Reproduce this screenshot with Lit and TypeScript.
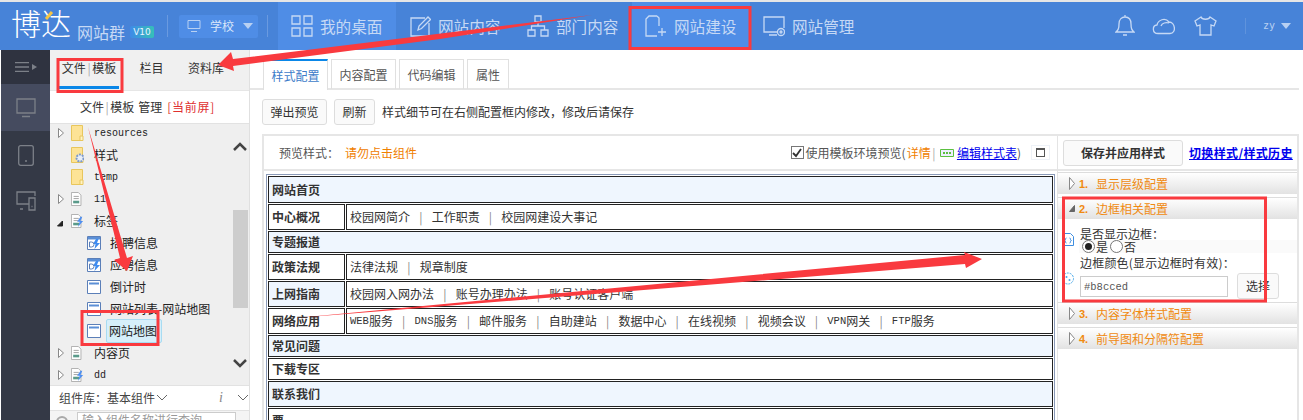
import { LitElement, html, css, svg } from "lit";
import { customElement } from "lit/decorators.js";

const ICONS: Record<string, any> = {
  desk: svg`<path d="M1 1h8v8H1zM13 1h8v8h-8zM1 13h8v8H1zM13 13h8v8h-8z"/>`,
  edit: svg`<path d="M16 3H2v18h18V8M9 15l1-4L19 2l2.500 2.500-9 9z"/>`,
  org: svg`<path d="M8 1h6v6H8zM1 15h7v6H1zM14 15h7v6h-7zM11 7v4M4.500 15v-4h13v4"/>`,
  build: svg`<path d="M12 1H4L1 4v17h11M12 1l2 2v8M13 17h8M17 13v8"/>`,
  manage: svg`<path d="M15 17H1V2h20v11M6 20h8"/><circle cx="18" cy="17" r="3.500"/><circle cx="18" cy="17" r="1"/>`,
};
const NAV = [
  ["desk", "我的桌面"],
  ["edit", "网站内容"],
  ["org", "部门内容"],
  ["build", "网站建设"],
  ["manage", "网站管理"],
];
type Row = { t: string; k: string; open?: boolean; arrow?: boolean; child?: boolean; sel?: boolean; latin?: boolean };
const TREE: Row[] = [
  { t: "resources", k: "folder", arrow: true, latin: true },
  { t: "样式", k: "gear" },
  { t: "temp", k: "folder", latin: true },
  { t: "11", k: "page", arrow: true, latin: true },
  { t: "标签", k: "bolt", open: true },
  { t: "招聘信息", k: "dyn", child: true },
  { t: "应聘信息", k: "dyn", child: true },
  { t: "倒计时", k: "win", child: true },
  { t: "网站列表-网站地图", k: "win", child: true },
  { t: "网站地图", k: "win", child: true, sel: true },
  { t: "内容页", k: "page", arrow: true },
  { t: "dd", k: "bolt", arrow: true, latin: true },
];
const ROWS: { l: string; links?: string[]; h: number; blue: boolean; lblue?: boolean }[] = [
  { l: "网站首页", h: 27, blue: true },
  { l: "中心概况", links: ["校园网简介", "工作职责", "校园网建设大事记"], h: 26, blue: false },
  { l: "专题报道", h: 22, blue: true },
  { l: "政策法规", links: ["法律法规", "规章制度"], h: 26, blue: false },
  { l: "上网指南", links: ["校园网入网办法", "账号办理办法", "账号认证客户端"], h: 26, blue: false, lblue: true },
  { l: "网络应用", links: ["WEB服务", "DNS服务", "邮件服务", "自助建站", "数据中心", "在线视频", "视频会议", "VPN网关", "FTP服务"], h: 26, blue: false },
  { l: "常见问题", h: 22, blue: true },
  { l: "下载专区", h: 22, blue: false },
  { l: "联系我们", h: 26, blue: true },
  { l: "票", h: 26, blue: false },
];

function treeIcon(k: string) {
  if (k === "folder" || k === "gear")
    return html`<svg class="ti" viewBox="0 0 13 16"><path d="M.5.5h11v15H.5z" fill="#fde396" stroke="#e8c65c"/><path d="M9 11h3v4.500H9z" fill="#fff3c4" stroke="#e8c65c"/>${k === "gear"
        ? svg`<circle cx="9" cy="11" r="3.500" fill="#e8eef8" stroke="#7d9acb" stroke-width="2" stroke-dasharray="2 1"/>`
        : ""}</svg>`;
  if (k === "page" || k === "bolt")
    return html`<svg class="ti" viewBox="0 0 15 16"><path d="M.5.5h8l3 3v12H.5z" fill="#fff" stroke="#a8a8a8"/><path d="M3 5h6M3 7.500h6" stroke="#999"/><path d="M2.500 10h7v3h-7z" fill="#5a9a8a"/>${k === "bolt"
        ? svg`<path d="M11 3l-4 6h3l-2 6 6-7h-3l2-5z" fill="#4f8ff0"/>`
        : ""}</svg>`;
  if (k === "dyn")
    return html`<svg class="ci" viewBox="0 0 14 14"><path d="M.5.5h13v13H.5z" fill="#fff" stroke="#5b7fb8"/><path d="M1 1h12v2.500H1z" fill="#5b8fd6"/><path d="M9 3L6 8h2.500l-1 5L13 7h-3l1.500-4z" fill="#3f8cf0"/><path d="M2.500 6h2a2 2 0 010 5h-2z" fill="none" stroke="#5b7fb8"/></svg>`;
  return html`<svg class="ci" viewBox="0 0 14 14"><path d="M.5.5h13v13H.5z" fill="#fff" stroke="#5b7fb8"/><path d="M2 2.500h10v2H2z" fill="#5b8fd6"/></svg>`;
}

@customElement("app-root")
export class AppRoot extends LitElement {
  static styles = css`
    :host { display: block; width: 1303px; height: 420px; overflow: hidden; position: relative; background: #fff;
      font: 12px/16px "Noto Sans CJK SC", "Liberation Sans", sans-serif; color: #333; }
    * { box-sizing: border-box; }
    .top { height: 2px; background: #e6e6e6; }
    header { height: 48px; background: #4783d8; display: flex; align-items: stretch; color: #c6d9f5; }
    .logo { width: 167px; display: flex; align-items: center; padding-left: 11px; position: relative; }
    .bd { font-size: 30px; line-height: 38px; color: #fff; font-weight: 300; width: 66px; margin-top: -9px; }
    .qun { font-size: 16px; color: #c6d9f5; margin: 12px 0 0 0; width: 53px; white-space: nowrap; }
    .badge { width: 24px; height: 12px; border-radius: 2px; background: linear-gradient(90deg, #3f8ae8, #35c0b8); color: #e8f4ff;
      font: 9px/12px "DejaVu Sans", sans-serif; text-align: center; margin-top: 12px; }
    .sep { width: 1px; height: 22px; background: #6a9ae0; align-self: center; flex: none; }
    .schoolwrap { width: 99px; display: flex; align-items: center; padding-left: 11px; }
    .school { width: 79px; height: 23px; background: #4f8de6; border-radius: 2px; display: flex; align-items: center; padding-left: 8px; gap: 9px; font-size: 12px; color: #d8e6fa; }
    .school svg { width: 14px; height: 14px; flex: none; fill: none; stroke: #b8d0f2; }
    .tri { width: 0; height: 0; border-left: 5.500px solid transparent; border-right: 5.500px solid transparent; border-top: 6px solid #b8d0f2; }
    .navs { margin-left: 10px; display: flex; }
    .nav { width: 118px; display: flex; align-items: center; padding-left: 13px; gap: 7px; font-size: 15.600px; white-space: nowrap; }
    .nav.hl { background: #4f8de6; }
    .nav svg { width: 22px; height: 22px; fill: none; stroke: #c6d9f5; stroke-width: 1.300; flex: none; }
    .rt { margin-left: auto; display: flex; align-items: center; padding-right: 12px; }
    .rt svg { fill: none; stroke: #c6d9f5; stroke-width: 1.300; }
    .bell { width: 20px; height: 22px; margin-right: 17px; }
    .cloud { width: 25px; height: 18px; margin-right: 17px; }
    .shirt { width: 23px; height: 20px; margin-right: 28px; }
    .rt .sep { background: #5f93dc; height: 16px; margin-right: 17px; }
    .zy { font: 10px/12px "DejaVu Sans Mono", monospace; color: #b8d0f2; margin-right: 6px; }

    .body { display: flex; height: 370px; }
    .rail { width: 49px; margin-left: 1px; background: #343946; flex: none; }
    .rail .m { height: 34px; background: #2f3340; display: flex; align-items: center; justify-content: center; }
    .rail .d { height: 47px; display: flex; align-items: center; justify-content: center; background: #454b5f; }
    .rail .e { height: 46px; display: flex; align-items: center; justify-content: center; }
    .rail .d + .e { margin-top: 1px; }
    .rail svg { fill: none; stroke: #7c8088; stroke-width: 1.300; }

    .side { width: 200px; flex: none; background: #efefef; border-right: 1px solid #e0e0e0; display: flex; flex-direction: column; }
    .stabs { height: 40px; flex: none; display: flex; padding-left: 9px; background: #f0f0f0; }
    .stab { width: 60px; text-align: center; padding-top: 10px; color: #333; height: 40px; white-space: nowrap; }
    .stab.on { border-bottom: 3px solid #0a87e8; height: 39px; }
    .p { color: #aaa; margin: 0 1.500px; }
    .stab.b { width: 45px; margin-left: 10px; }
    .stab.c { width: 36px; margin-left: 14px; }
    .shead { height: 34px; flex: none; background: #fff; border-bottom: 1px solid #e2e2e2; padding: 8px 0 0 30px; color: #333; white-space: nowrap; border-top: 1px solid #e6e6e6; }
    .shead b { font-weight: 400; margin-left: 4px; }
    .shead i { font-style: normal; color: #e03030; margin-left: 5px; letter-spacing: .7px; }
    .tree { height: 261px; flex: none; position: relative; overflow: hidden; }
    .tr { height: 22px; display: flex; align-items: center; position: relative; color: #222; white-space: nowrap; }
    .tr:first-child { margin-top: -2px; }
    .ar { position: absolute; left: 8px; top: 6px; width: 6px; height: 10px; fill: #fff; stroke: #888; }
    .ar.o { fill: #222; stroke: #222; top: 9px; left: 7px; }
    .ti { width: 13px; height: 16px; margin-left: 21px; flex: none; }
    .ci { width: 14px; height: 14px; margin-left: 37px; flex: none; }
    .lb { margin-left: 10px; }
    .child .lb { margin-left: 8px; padding: 0 1px; }
    .lat { font: 10px/16px "Liberation Mono", monospace; position: relative; top: 1px; }
    .sel .lb { background: #d6effa; border: 1px solid #a8dcf2; border-radius: 2px; padding: 3px 4px 3px 2px; margin-left: 5px; }
    .thumb { position: absolute; right: 1px; top: 86px; width: 15px; height: 98px; background: #cdcdcd; }
    .chev { position: absolute; right: 2px; width: 14px; height: 9px; fill: none; stroke: #444; stroke-width: 2.500; }
    .lib { height: 25px; flex: none; background: #fff; border-top: 1px solid #e2e2e2; display: flex; align-items: center; padding-left: 9px; color: #444; position: relative; }
    .lib svg { width: 12px; height: 8px; fill: none; stroke: #666; margin-left: 1px; }
    .lib em { position: absolute; left: 169px; font: italic 14px "Liberation Serif", serif; color: #888; }
    .lib .v2 { position: absolute; left: 186px; }
    .sr { flex: 1; min-height: 0; overflow: hidden; background: #f4f4f4; border-top: 1px solid #e2e2e2; display: flex; padding: 1px 0 0 6px; gap: 9px; }
    .sr svg { width: 12px; height: 14px; fill: none; stroke: #aaa; stroke-width: 2; margin-top: 3px; flex: none; }
    .sr div { width: 159px; height: 14px; border: 1px solid #ccc; border-bottom: 0; background: #fff; color: #999; padding-left: 4px; line-height: 14px; overflow: hidden; white-space: nowrap; flex: none; }

    main { flex: 1; min-width: 0; padding: 0 4px 0 0; }
    .tabs { height: 40px; border-bottom: 2px solid #e6e6e6; display: flex; padding: 9px 0 0 13px; gap: 3px; }
    .tab { width: 65px; height: 30px; border: 1px solid #e0e0e0; border-bottom: 0; text-align: center; line-height: 29px; color: #555; flex: none; }
    .tab.on { border-top: 2px solid #0a87e8; color: #3d7cc9; height: 31px; background: #fff; }
    .tab.s { width: 42px; }
    .tools { height: 44px; display: flex; align-items: center; padding: 0 0 0 12px; gap: 7px; }
    .btn { height: 26px; border: 1px solid #ddd; border-radius: 3px; background: #fafafa; padding: 0 7.500px; line-height: 24px; color: #333; flex: none; text-align: center; }
    .frame { margin-left: 12px; border: 2px solid #e6e6e6; border-bottom: 0; height: 286px; display: flex; background: #fff; }
    .pv { width: 794px; flex: none; border-right: 1px solid #e4e4e4; }
    .pvh { height: 35px; border-bottom: 2px solid #e6e6e6; display: flex; align-items: center; padding-left: 15px; color: #555; white-space: nowrap; }
    .pvh .w { color: #f08000; margin-left: 6px; }
    .sp { flex: 1; }
    .chk { width: 13px; height: 13px; border: 1px solid #777; background: #fff; display: flex; align-items: center; justify-content: center; margin-right: 2px; }
    .chk svg { width: 10px; height: 10px; fill: none; stroke: #333; stroke-width: 1.800; }
    .or { color: #f08000; margin-left: 1px; }
    .lnk { color: #0000ee; text-decoration: underline; }
    .mini { width: 19px; height: 15px; border: 1px solid #eef2f8; margin: 0 7px 0 10px; display: flex; align-items: center; justify-content: center; }
    .mini span { display: block; width: 9px; height: 9px; border: 1px solid #555; border-top-width: 2px; }
    .css { width: 15px; height: 12px; flex: none; margin: 0 2px 0 3px; }
    .tbl { margin: 3px 0 0 2px; border: 1px solid #8a9ab8; padding: 1px 1px 0; width: 789px; }
    .row { display: flex; gap: 1px; margin-bottom: 1px; }
    .cell { border: 1.500px solid #222; padding-left: 3px; display: flex; align-items: center; white-space: nowrap; }
    .cell.l { width: 77px; flex: none; font-weight: 700; }
    .cell.f { flex: 1; }
    .cell.bl { background: #eff6fe; }
    .cell.full { flex: 1; font-weight: 700; }
    .pipe { color: #888; margin: 0 9.200px; }
    .en { font-size: 10.500px; font-family: "Liberation Mono", monospace; }
    .pn { flex: 1; min-width: 0; }
    .pnh { height: 35px; border-bottom: 2px solid #e6e6e6; display: flex; align-items: center; padding-left: 5px; white-space: nowrap; }
    .save { width: 120px; height: 26px; font-weight: 700; padding: 0; line-height: 24px; color: #333; }
    .pnh .lnk { font-weight: 700; margin-left: 6px; letter-spacing: .35px; }
    .ah { height: 22px; margin-top: 3px; background: linear-gradient(#fff, #e2e2e2); border-top: 1px solid #ddd; display: flex; align-items: center; padding-left: 11px; color: #f08a10; white-space: nowrap; }
    .ah.first { margin-top: 1px; }
    .ah.after { margin-top: 1px; }
    .ah b { font: 700 11px "Liberation Sans", sans-serif; width: 17px; margin-left: 4px; }
    .aa { width: 6px; height: 13px; fill: #fff; stroke: #888; flex: none; }
    .aa.o { fill: #666; stroke: #666; height: 7px; }
    .ac { height: 82px; padding: 8px 0 0 22px; position: relative; line-height: 13px; color: #333; white-space: nowrap; }
    .ctext { letter-spacing: .2px; margin-bottom: 4px; }
    .rad { display: flex; align-items: center; padding-left: 3px; margin-bottom: 3px; height: 13px; background: #fafafa; margin-left: -1px; }
    .rad span { width: 13px; height: 13px; border-radius: 50%; border: 1px solid #777; display: flex; align-items: center; justify-content: center; background: #fff; flex: none; }
    .rad span u { display: block; width: 7px; height: 7px; border-radius: 50%; background: #222; }
    .rad em { font-style: normal; margin: 0 2px 0 1px; }
    .inp { display: flex; align-items: center; gap: 9px; }
    .inp div:first-child { width: 148px; height: 21px; border: 1px solid #ccc; padding-left: 3px; font: 10.500px/20px "Liberation Mono", monospace; color: #555; }
    .inp .btn { width: 42px; padding: 0; }
    .si { position: absolute; left: 4px; width: 12px; height: 13px; }
    .over { position: absolute; left: 0; top: 0; width: 1303px; height: 420px; pointer-events: none; }
  `;

  render() {
    const closed = html`<svg class="ar" viewBox="0 0 6 10"><path d="M.5.500l5 4.500-5 4.500z"/></svg>`;
    const open = html`<svg class="ar o" viewBox="0 0 6 10"><path d="M5.500 2v5h-5z"/></svg>`;
    const aaC = html`<svg class="aa" viewBox="0 0 6 13"><path d="M.5.500l5 6-5 6z"/></svg>`;
    const aaO = html`<svg class="aa o" viewBox="0 0 6 7"><path d="M5.500.500v6h-5z"/></svg>`;
    return html`
      <div class="top"></div>
      <header>
        <div class="logo">
          <span class="bd">博达</span><span class="qun">网站群</span><span class="badge">V10</span>
        </div>
        <span class="sep"></span>
        <div class="schoolwrap"><div class="school">
          <svg viewBox="0 0 14 14"><path d="M1 1.500h12v8H1zM4 12.500h6"/></svg>学校<span class="tri"></span>
        </div></div>
        <span class="sep"></span>
        <div class="navs">
          ${NAV.map(([ic, t], i) => html`<div class="nav ${i === 0 || i === 3 ? "hl" : ""}"><svg viewBox="0 0 22 22">${ICONS[ic]}</svg>${t}</div>`)}
        </div>
        <div class="rt">
          <svg class="bell" viewBox="0 0 20 22"><path d="M1 17c2-2 3-3 3-8s3-7 6-7 6 2 6 7 1 6 3 8zM10 0v2M8 20h4"/></svg>
          <svg class="cloud" viewBox="0 0 25 18"><path d="M6 16.500c-6 0-6-8-1-8.500 1-5 8-8 12-3 6 0 8 11 1 11.500zM9 9c1-3 5-4 8-3"/></svg>
          <svg class="shirt" viewBox="0 0 23 20"><path d="M7 1L1 5l2 5 3-1v10h11V9l3 1 2-5-6-4c-1 3-8 3-9 0z"/></svg>
          <span class="sep"></span>
          <span class="zy">zy</span><span class="tri"></span>
        </div>
      </header>
      <div class="body">
        <nav class="rail">
          <div class="m"><svg width="22" height="10" viewBox="0 0 22 10"><path d="M0 .500h14M0 5h14M0 9.500h14" /><path d="M17 2l5 3-5 3z" fill="#7c8088" stroke="none"/></svg></div>
          <div class="d"><svg width="20" height="20" viewBox="0 0 20 20"><path d="M1 1h18v14H1zM6 18.500h8"/></svg></div>
          <div class="e"><svg width="16" height="21" viewBox="0 0 16 21"><rect x=".7" y=".7" width="14.600" height="19.600" rx="2"/><path d="M7 16h2"/></svg></div>
          <div class="e"><svg width="20" height="20" viewBox="0 0 20 20"><path d="M13 13H1V1h18v4M4 18h3M13 7h6v12h-6zM15.500 15.500h1"/></svg></div>
        </nav>
        <aside class="side">
          <div class="stabs">
            <div class="stab on">文件<span class="p">|</span>模板</div><div class="stab b">栏目</div><div class="stab c">资料库</div>
          </div>
          <div class="shead">文件<span class="p">|</span>模板<b>管理</b><i>[当前屏]</i></div>
          <div class="tree">
            ${TREE.map((r) => html`<div class="tr ${r.child ? "child" : ""} ${r.sel ? "sel" : ""}">
              ${r.arrow ? closed : ""}${r.open ? open : ""}
              ${treeIcon(r.k)}<span class="lb ${r.latin ? "lat" : ""}">${r.t}</span>
            </div>`)}
            <div class="thumb"></div>
            <svg class="chev" style="top:18px" viewBox="0 0 14 9"><path d="M1 8l6-6 6 6"/></svg>
            <svg class="chev" style="top:235px" viewBox="0 0 14 9"><path d="M1 1l6 6 6-6"/></svg>
          </div>
          <div class="lib">组件库：基本组件<svg viewBox="0 0 12 8"><path d="M1 1l5 5 5-5"/></svg><em>i</em><svg class="v2" viewBox="0 0 12 8"><path d="M1 1l5 5 5-5"/></svg></div>
          <div class="sr"><svg viewBox="0 0 12 14"><circle cx="6" cy="7" r="5"/></svg><div>输入组件名称进行查询</div></div>
        </aside>
        <main>
          <div class="tabs">
            <div class="tab on">样式配置</div><div class="tab">内容配置</div><div class="tab">代码编辑</div><div class="tab s">属性</div>
          </div>
          <div class="tools">
            <div class="btn">弹出预览</div><div class="btn">刷新</div><span>样式细节可在右侧配置框内修改，修改后请保存</span>
          </div>
          <div class="frame">
            <section class="pv">
              <div class="pvh">预览样式：<span class="w">请勿点击组件</span><span class="sp"></span>
                <span class="chk"><svg viewBox="0 0 10 10"><path d="M1 5l3 3 5-7"/></svg></span>使用模板环境预览(<span class="or">详情</span><span class="p">|</span>
                <svg class="css" viewBox="0 0 15 12"><path d="M.5 2.500h13v7H.5z" fill="#eef" stroke="#5cc040"/><path d="M3 6h9" stroke="#5cc040" stroke-width="2" stroke-dasharray="2 1"/></svg><span class="lnk">编辑样式表</span>)
                <span class="mini"><span></span></span>
              </div>
              <div class="tbl">
                ${ROWS.map((r) => html`<div class="row" style="height:${r.h}px">
                  ${r.links
                    ? html`<div class="cell l ${r.lblue ? "bl" : ""}">${r.l}</div>
                        <div class="cell f ${r.blue ? "bl" : ""}">${r.links.map((x, i) => html`${i ? html`<span class="pipe">|</span>` : ""}${x.replace(/[^A-Z]/g, "") ? html`<span class="en">${x.replace(/[^A-Z]/g, "")}</span>${x.replace(/[A-Z]/g, "")}` : x}`)}</div>`
                    : html`<div class="cell full ${r.blue ? "bl" : ""}">${r.l}</div>`}
                </div>`)}
              </div>
            </section>
            <section class="pn">
              <div class="pnh"><div class="btn save">保存并应用样式</div><span class="lnk">切换样式/样式历史</span></div>
              <div class="ah first">${aaC}<b>1.</b>显示层级配置</div>
              <div class="ah">${aaO}<b>2.</b>边框相关配置</div>
              <div class="ac">
                <svg class="si" style="top:14px" viewBox="0 0 12 13"><path d="M1.500.500h7l3 3v9h-10z" fill="#fff" stroke="#3f8ee0"/><path d="M4.500 5c-1 0-1 .5-1 1.500s-1 1-1 1 1 0 1 1 0 1.500 1 1.500M7.500 5c1 0 1 .5 1 1.500s1 1 1 1-1 0-1 1 0 1.500-1 1.500" fill="none" stroke="#3f8ee0"/></svg>
                <svg class="si" style="top:53px" viewBox="0 0 12 13"><circle cx="6" cy="6.500" r="5.500" fill="#fff" stroke="#49a8e8" stroke-dasharray="2 1"/><circle cx="4.500" cy="5" r="1" fill="#49a8e8"/><circle cx="7.500" cy="8" r="1" fill="#49a8e8"/></svg>
                <div>是否显示边框：</div>
                <div class="rad"><span><u></u></span><em>是</em><span></span><em>否</em></div>
                <div class="ctext">边框颜色(显示边框时有效)：</div>
                <div class="inp"><div>#b8cced</div><div class="btn">选择</div></div>
              </div>
              <div class="ah after">${aaC}<b>3.</b>内容字体样式配置</div>
              <div class="ah">${aaC}<b>4.</b>前导图和分隔符配置</div>
            </section>
          </div>
        </main>
      </div>
      <svg class="over" viewBox="0 0 1303 420">
        <path d="M46 19l6-7" stroke="#f5c542" stroke-width="3" fill="none"/>
        <g fill="none" stroke="#f93a3f" stroke-width="3">
          <rect x="58" y="59.500" width="64" height="32"/>
          <rect x="630" y="7.500" width="120" height="41"/>
          <rect x="82" y="311.500" width="76" height="33"/>
          <rect x="1063.500" y="198" width="202" height="103"/>
        </g>
        <g fill="#f93a3f">
          <path d="M592 15L233 59l-2-7-13 13 16 6-1-5 207-27z"/>
          <path d="M88 127l39 131 6-2-6 15-13-11 6-2z"/>
          <path d="M296 318L965 255l-1-3 18 7-16 9-1-4z"/>
        </g>
      </svg>
    `;
  }
}
